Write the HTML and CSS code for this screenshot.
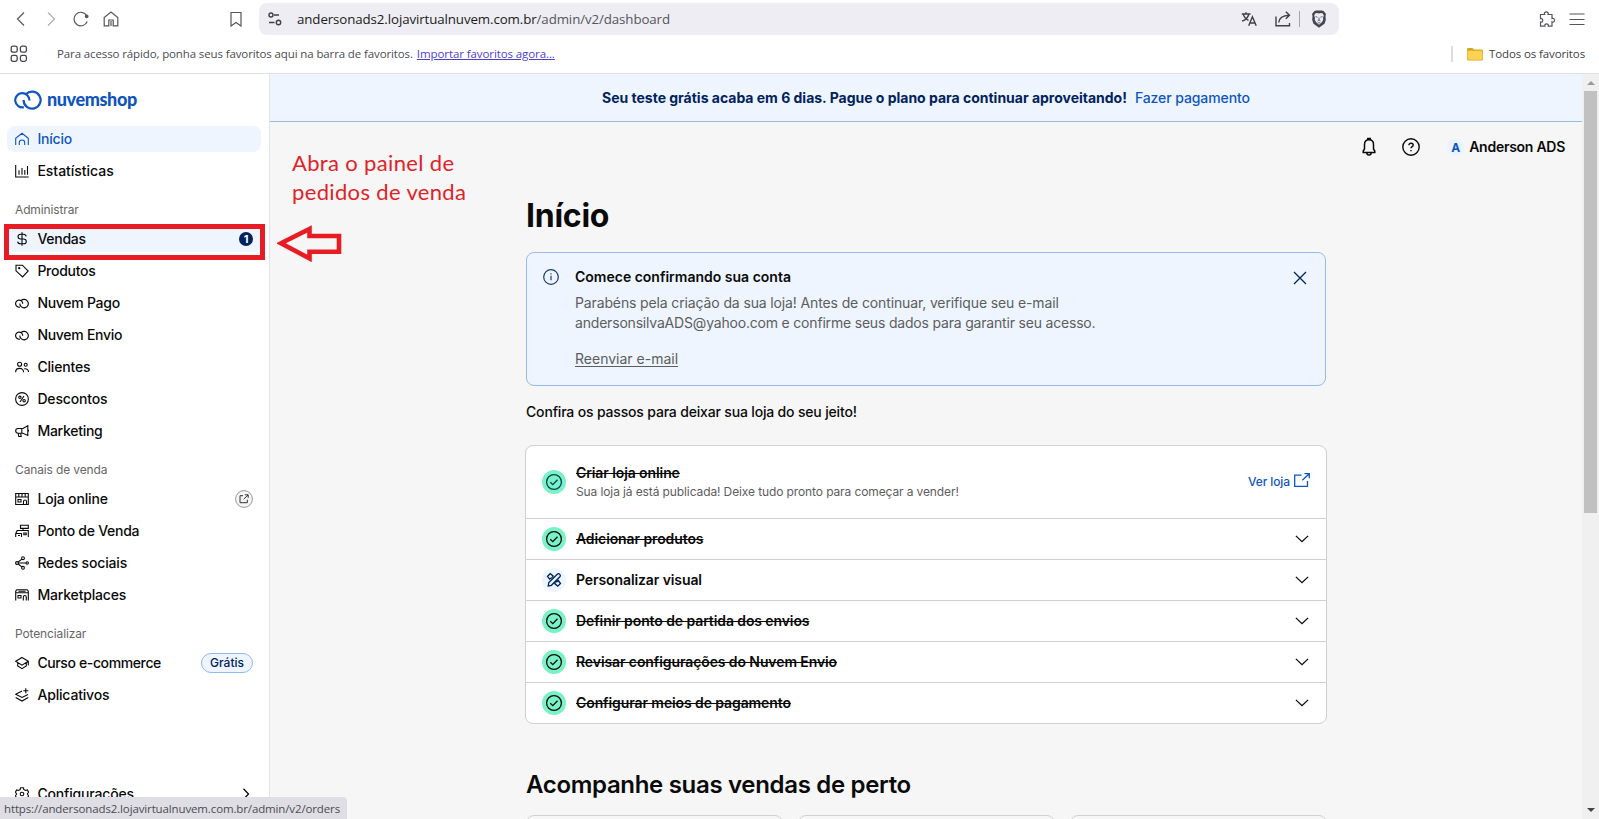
FILE: index.html
```html
<!DOCTYPE html>
<html lang="pt-BR">
<head>
<meta charset="utf-8">
<title>Nuvemshop - Início</title>
<link rel="stylesheet" href="styles.css">
</head>
<body>
<svg class="defs" aria-hidden="true">
  <symbol id="cloud" viewBox="0 0 28 20"><path d="M9.600 10A8.500 8.500 0 1 0 12 4.200"/><path d="M15.400 10.500A7.100 7.100 0 1 0 9.800 17.200"/></symbol>
  <symbol id="check" viewBox="0 0 24 24"><circle class="disc" cx="12" cy="12" r="12"/><circle cx="12" cy="12" r="7.4"/><path d="M8.300 12.300l2.500 2.400 4.700-4.900"/></symbol>
  <symbol id="down" viewBox="0 0 14 8"><path d="M.9.9L7 6.700 13.100.9"/></symbol>
</svg>

<header class="browser">
  <div class="toolbar">
    <svg class="tb back" viewBox="0 0 16 16"><path d="M11 1.500L4.500 8l6.500 6.500"/></svg>
    <svg class="tb fwd" viewBox="0 0 16 16"><path d="M5 1.500L11.500 8 5 14.500"/></svg>
    <svg class="tb" viewBox="0 0 16 16"><path d="M14.200 10.500A6.800 6.800 0 1 1 13.500 4.300"/><circle class="solid" cx="13.700" cy="5.300" r="1.300"/></svg>
    <svg class="tb" viewBox="0 0 16 16"><path d="M1.200 14.800V6.500L8 1l6.800 5.500v8.300H10.200V9H5.800v5.800z"/><path d="M8 10v5"/></svg>
    <svg class="tb mark" viewBox="0 0 16 16"><path d="M3 1.500h10v13.500L8 11.500 3 15z"/></svg>
    <div class="address">
      <svg class="tb dark" viewBox="0 0 16 16"><circle cx="4" cy="4" r="2"/><path d="M7 4h5M2 11.500h5.500"/><circle cx="11.500" cy="11.500" r="2.200"/></svg>
      <span class="url">andersonads2.lojavirtualnuvem.com.br<span>/admin/v2/dashboard</span></span>
      <svg class="tb dark translate" viewBox="0 0 16 16"><path d="M.8 3h8.700M5 1.200V3M2.200 3c.8 3 3 5.300 5.300 6.300M7.900 3C7 6.500 4.500 9 1 10.200M7.700 14.800l3.700-9 3.800 9M9 12h5"/></svg>
      <svg class="tb dark share" viewBox="0 0 16 16"><path d="M1 5.500v9.300h13.500V12M3.800 11.500c.3-4.500 3-7 10.500-7.300M10.800.7l3.700 3.500-3.700 3.500"/></svg>
      <i class="bar"></i>
      <svg class="brave" viewBox="0 0 16 18"><path fill="#454552" d="M3.200 1.200L5 .5h6l1.800.7L15 4l-.5 2 .3 4-1.300 3.700L8 17.700l-5.500-4L1.200 10l.3-4L1 4z"/><path fill="#eeedf3" d="M4.200 3.500L6 3l2 .6L10 3l1.800.5 1 2-.8 2.400.2 2.100-1.400 2.300L8 14.700l-2.800-2.400L3.800 10l.2-2.100-.8-2.400z"/><path fill="none" stroke="#454552" stroke-width=".8" d="M4.500 6.600l2 .6M11.500 6.600l-2 .6M8 7.500V10l-1.500 1M8 10l1.500 1M6.800 12.800h2.400"/></svg>
    </div>
    <svg class="tb puzzle" viewBox="0 0 16 16"><path d="M1.500 3.500h4.200C4.700 1.800 6 .8 7.300.8s2.700 1 1.700 2.700h4v4c1.500-.7 2.500.4 2.500 1.700s-1 2.300-2.500 1.600v4.400H9.300c.5-1.500-.6-2.300-1.700-2.300s-2.200.8-1.700 2.300H1.500v-4.200c1.700.5 2.300-.6 2.300-1.700S3 7.300 1.500 7.700z"/></svg>
    <svg class="tb menu" viewBox="0 0 16 16"><path d="M.5 3h15M.5 8.500h15M.5 13.500h15"/></svg>
  </div>
  <div class="bookmarks">
    <svg class="apps" viewBox="0 0 18 18"><rect x="1.200" y="1.200" width="6" height="6" rx="1.800"/><rect x="10.400" y="1.200" width="6" height="6" rx="1.800"/><rect x="1.200" y="10.400" width="6" height="6" rx="1.800"/><rect x="10.400" y="10.400" width="6" height="6" rx="1.800"/></svg>
    <span class="hint">Para acesso rápido, ponha seus favoritos aqui na barra de favoritos.</span>
    <a class="import">Importar favoritos agora...</a>
    <i class="divider"></i>
    <svg class="folder" viewBox="0 0 16 14"><path fill="#d9a520" d="M0 2.500C0 1.500.5 1 1.500 1h4L7 2.500h7.500c1 0 1.500.5 1.500 1.500v8c0 1-.5 1.500-1.500 1.500h-13C.5 13.500 0 13 0 12z"/><path fill="#fdd253" d="M.5 5c0-.8.4-1.200 1.200-1.200h12.600c.8 0 1.200.4 1.200 1.200v6.600c0 .8-.4 1.200-1.200 1.200H1.700c-.8 0-1.200-.4-1.200-1.200z"/></svg>
    <span class="all">Todos os favoritos</span>
  </div>
</header>

<div class="app">
  <aside class="sidebar">
    <div class="brand"><svg class="logo"><use href="#cloud"/></svg><span>nuvemshop</span></div>
    <nav>
      <a class="item active"><svg class="ic" viewBox="0 0 14 14"><path d="M.7 13V6.200L7 1.200l6.300 5V13M4.300 13v-2.300a2.700 2.700 0 0 1 5.400 0V13"/></svg><span>Início</span></a>
      <a class="item wide"><svg class="ic" viewBox="0 0 14 14"><path d="M.7 1v12h13M4 10.800V6.300M7 10.800V4M9.800 10.800V6M12.500 10.800V2"/></svg><span>Estatísticas</span></a>
      <h6>Administrar</h6>
      <a class="item hover"><svg class="ic" viewBox="0 0 14 14"><path d="M7 .3v13.400M11.200 4.300C11 2.900 9.800 2.200 8.300 2.200H5.900C4.200 2.200 3 3.200 3 4.600S4.100 7 5.800 7h2.600c1.700 0 2.900.9 2.900 2.400s-1.200 2.400-2.900 2.400H5.600c-1.600 0-2.800-.8-2.900-2.200"/></svg><span>Vendas</span><b class="count">1</b></a>
      <a class="item"><svg class="ic" viewBox="0 0 14 14"><path d="M1 1.200h6.400L13.200 7l-5.600 6L1 6.800z"/><circle cx="4.200" cy="4.200" r=".6"/></svg><span>Produtos</span></a>
      <a class="item"><svg class="ic small-cloud"><use href="#cloud"/></svg><span>Nuvem Pago</span></a>
      <a class="item"><svg class="ic small-cloud"><use href="#cloud"/></svg><span>Nuvem Envio</span></a>
      <a class="item near"><svg class="ic" viewBox="0 0 14 14"><circle cx="4.600" cy="4.200" r="2"/><circle cx="10.700" cy="4.800" r="1.500"/><path d="M.6 12.300c0-2.300 1.600-3.900 4-3.900s4 1.600 4 3.900M9.300 8.900c2.400-.7 4.200.9 4.200 3.100"/></svg><span>Clientes</span></a>
      <a class="item near"><svg class="ic" viewBox="0 0 14 14"><circle cx="7" cy="7" r="6.400"/><circle cx="4.900" cy="5.300" r="1.200"/><circle cx="9.100" cy="8.700" r="1.200"/><path d="M9 4L5 10"/></svg><span>Descontos</span></a>
      <a class="item"><svg class="ic" viewBox="0 0 14 14"><path d="M12.800 1.800v9.600L8 9.200H3.200C1.700 9.200.7 8.300.7 6.800s1-2.300 2.500-2.300H8zM6.800 4.500v4.700M3 9.200l.8 3.300h2.400l-.6-3.300M13.500 5.800v1.700"/></svg><span>Marketing</span></a>
      <h6>Canais de venda</h6>
      <a class="item near"><svg class="ic" viewBox="0 0 14 14"><path d="M.7 1.500h12.600v11H.7zM.7 5h12.600M3.800 1.500V5M7 1.500V5M10.200 1.500V5M3 7.500h3V10H3zM8.500 12.500v-3a1.500 1.500 0 0 1 3 0v3"/></svg><span>Loja online</span>
        <svg class="open" viewBox="0 0 18 18"><circle cx="9" cy="9" r="8.400"/><path d="M8 5.700H5v7h7.300v-3M9.800 4.800h3.400v3.100M13 5L8.700 9.200"/></svg></a>
      <a class="item"><svg class="ic" viewBox="0 0 14 14"><path d="M5.500 1.200h7.800v3.200H5.500zM8 4.400v2M.7 13V9.700L2.200 6.500h11.100V13M.7 9.500h5.800V13M8.800 9h2.400v1.800H8.800zM3 11.500h2"/></svg><span>Ponto de Venda</span></a>
      <a class="item near"><svg class="ic" viewBox="0 0 14 14"><circle cx="2" cy="7" r="1.400"/><circle cx="8" cy="2.200" r="1.400"/><circle cx="12.200" cy="7" r="1.200"/><circle cx="8" cy="11.800" r="1.400"/><path d="M3.400 7H11M3.200 6L6.800 3.100M3.200 8l3.600 2.900"/></svg><span>Redes sociais</span></a>
      <a class="item near"><svg class="ic" viewBox="0 0 14 14"><path d="M.7 12.500V3.200L1.700 1.700h10.600l1 1.500v9.300M.7 4.800h12.600M3 7.500h3V10H3zM8.300 12.500V9.300c0-2.400 3-2.400 3 0v3.200M3.500 3.200h7"/></svg><span>Marketplaces</span></a>
      <h6>Potencializar</h6>
      <a class="item tight"><svg class="ic" viewBox="0 0 14 14"><path d="M7 1.500l6.300 3.800L7 9.100.7 5.300zM2.700 6.700v3.200L7 12.700l4.300-2.800V6.700M13.300 5.300v4.200"/></svg><span>Curso e-commerce</span><b class="pill">Grátis</b></a>
      <a class="item near"><svg class="ic" viewBox="0 0 14 14"><path d="M7 3L.7 6.200 7 9.400l6-3M10.800.3v5M8.300 2.800h5M.7 9.500L7 13l6.300-3.500"/></svg><span>Aplicativos</span></a>
    </nav>
    <a class="item near config"><svg class="ic" viewBox="0 0 14 14"><path d="M5.600.7h2.800l.5 1.900 1.700.9 1.800-.6 1.200 2.300L12.300 7l1.300 1.800-1.200 2.300-1.800-.5-1.700.9-.5 1.800H5.600l-.5-1.800-1.700-.9-1.800.5L.4 8.800 1.700 7 .4 5.200l1.200-2.300 1.800.6 1.700-.9z"/><circle cx="7" cy="7" r="1.800"/></svg><span>Configurações</span>
      <svg class="next" viewBox="0 0 8 12"><path d="M1.500.8L6.500 6l-5 5.200"/></svg></a>
  </aside>

  <main>
    <div class="trial"><b>Seu teste grátis acaba em 6 dias. Pague o plano para continuar aproveitando!</b><a>Fazer pagamento</a></div>
    <div class="userbar">
      <svg class="bell" viewBox="0 0 14 20"><path d="M1.200 15.500h11.600V14L11.500 12V7.500c0-2.800-1.700-4.800-4.500-4.800S2.500 4.700 2.500 7.500V12L1.200 14zM5.800 2.800V1.500h2.400v1.300M4.800 15.800c0 3 4.400 3 4.400 0"/></svg>
      <svg class="help" viewBox="0 0 18 18"><circle cx="9" cy="9" r="8.200"/><path d="M6.900 7.200c0-2.600 4.300-2.500 4.300 0C11.200 8.700 9 8.700 9 10.300M9 11.900v1.400"/></svg>
      <span class="avatar">A</span><span class="user">Anderson ADS</span>
    </div>
    <div class="column">
      <h1>Início</h1>
      <section class="alert">
        <svg class="info" viewBox="0 0 16 16"><circle cx="8" cy="8" r="7.300"/><path d="M8 6.800v4.400M8 4.300v1.300"/></svg>
        <div class="msg">
          <h2>Comece confirmando sua conta</h2>
          <p><span>Parabéns pela criação da sua loja! Antes de continuar, verifique seu e-mail</span><br>andersonsilvaADS@yahoo.com e confirme seus dados para garantir seu acesso.</p>
          <a>Reenviar e-mail</a>
        </div>
        <svg class="close" viewBox="0 0 14 14"><path d="M1 1l12 12M13 1L1 13"/></svg>
      </section>
      <p class="intro">Confira os passos para deixar sua loja do seu jeito!</p>
      <section class="steps">
        <div class="step first done"><svg class="st navy"><use href="#check"/></svg>
          <div class="txt"><h3>Criar loja online</h3><p>Sua loja já está publicada! Deixe tudo pronto para começar a vender!</p></div>
          <a class="visit">Ver loja<svg viewBox="0 0 16 14"><path d="M7.500 2.200H.7v11.100h12.800V8M10.500.7h4.800v4.600M15 1L8.300 7.200"/></svg></a></div>
        <div class="step done"><svg class="st"><use href="#check"/></svg><h3>Adicionar produtos</h3><svg class="chev"><use href="#down"/></svg></div>
        <div class="step"><svg class="st tools" viewBox="0 0 24 24"><circle class="disc" cx="12" cy="12" r="12"/><path d="M6.200 18l.6-3.400 8.500-8.400c1.600-1.500 4.100 1 2.600 2.600l-8.500 8.500zM10 9.500L7.600 11.200 5.500 8.300 8.200 5.700l2.900 2.200-.8 1.500M14.300 14.200l2-1.700 2.200 3-2.700 2.600-2.900-2.300.7-1.300"/></svg><h3>Personalizar visual</h3><svg class="chev"><use href="#down"/></svg></div>
        <div class="step done"><svg class="st"><use href="#check"/></svg><h3>Definir ponto de partida dos envios</h3><svg class="chev"><use href="#down"/></svg></div>
        <div class="step done"><svg class="st"><use href="#check"/></svg><h3>Revisar configurações do Nuvem Envio</h3><svg class="chev"><use href="#down"/></svg></div>
        <div class="step done"><svg class="st"><use href="#check"/></svg><h3>Configurar meios de pagamento</h3><svg class="chev"><use href="#down"/></svg></div>
      </section>
      <h2 class="sales">Acompanhe suas vendas de perto</h2>
      <div class="cards"><div></div><div></div><div></div></div>
    </div>
  </main>

  <div class="scroll"><i class="up"></i><i class="thumb"></i><i class="dn"></i></div>
</div>

<div class="highlight"></div>
<div class="note">Abra o painel de<br>pedidos de venda</div>
<svg class="arrow" viewBox="0 0 66 38"><path d="M4 19.300L32.500 5v7h29.500v15.800H32.500v6.600z"/></svg>
<div class="status">https://andersonads2.lojavirtualnuvem.com.br/admin/v2/orders</div>
</body>
</html>
```
FILE: styles.css
```css
* { box-sizing: border-box; margin: 0; padding: 0; }
body { width: 1599px; height: 819px; overflow: hidden; display: flex; flex-direction: column; background: #fff; color: #0a0a0a; font-family: Inter, "Liberation Sans", sans-serif; font-size: 14px; }
svg { flex: none; fill: none; stroke: currentColor; display: block; }
.defs { position: absolute; width: 0; height: 0; }
.disc { stroke: none; }

/* Browser chrome */
.browser { height: 74px; border-bottom: 1px solid #dfe1ea; font-family: "Open Sans", sans-serif; }
.toolbar { height: 38px; display: flex; align-items: center; padding-left: 13px; }
.tb { width: 16px; height: 16px; color: #55565c; stroke-width: 1.2; margin-right: 14px; }
.fwd { color: #aaabb0; }
.solid { fill: currentColor; }
.toolbar > .mark { margin-left: 95px; margin-right: 15px; }
.address { width: 1080px; height: 32px; border-radius: 8px; background: #eeedf3; display: flex; align-items: center; padding-left: 8px; }
.dark { color: #3f4048; stroke-width: 1.4; }
.url { font-size: 13.3px; letter-spacing: -.1px; color: #1b1b20; flex: 1; }
.url span { color: #55565c; }
.address .translate { margin-right: 18px; }
.address .share { margin-right: 8px; }
.bar { width: 1px; height: 16px; background: #a5a5b0; margin-right: 11px; }
.brave { width: 16px; height: 18px; margin-right: 12px; stroke: none; }
.puzzle { margin-left: auto; }
.toolbar > .menu { margin-right: 14px; }
.bookmarks { height: 32px; display: flex; align-items: center; padding-left: 10px; font-size: 11.5px; letter-spacing: -.12px; color: #4b4c52; }
.bookmarks span, .bookmarks a { padding-bottom: 2px; }
.apps { width: 18px; height: 18px; color: #44454b; stroke-width: 1.3; margin-right: 29px; }
.hint { margin-right: 4px; }
.import { color: #4c3fd0; text-decoration: underline; letter-spacing: -.09px; }
.divider { width: 2px; height: 16px; background: #dcdde4; margin: 0 14px 0 auto; }
.folder { width: 16px; height: 14px; stroke: none; margin-right: 6px; }
.all { margin-right: 14px; color: #3f4045; }

/* Page shell */
.app { flex: 1; min-height: 0; display: flex; }
.sidebar { width: 270px; border-right: 1px solid #e3e4e8; display: flex; flex-direction: column; padding: 14px 8px 12px 7px; }
.brand { height: 24px; display: flex; align-items: center; gap: 5px; padding-left: 7px; margin-bottom: 14px; color: #0f55c0; font: 900 18px/22px Lato, sans-serif; letter-spacing: -.4px; }
.brand span { padding-bottom: 2px; }
.logo { width: 28px; height: 20px; stroke-width: 2.200; }
nav { display: flex; flex-direction: column; gap: 6px; }
.item { height: 26px; display: flex; align-items: center; gap: 8px; padding: 0 8px; border-radius: 8px; font-weight: 500; letter-spacing: -.27px; }
.item span { padding-bottom: 2px; }
.item .ic { margin-right: .4px; }
.near { letter-spacing: -.17px; }
.wide { letter-spacing: -.02px; }
.tight { letter-spacing: -.38px; }
.ic { width: 14px; height: 14px; stroke-width: 1.100; }
.small-cloud { stroke-width: 2.300; height: 11px; }
.active { background: #eef5ff; color: #0f55c0; letter-spacing: -.2px; }
.hover { background: #eef5ff; }
h6 { height: 30px; padding: 11px 8px 0; font-weight: 400; font-size: 12px; line-height: 18px; color: #666; letter-spacing: -.13px; }
.count { margin-left: auto; width: 14px; height: 14px; border-radius: 50%; background: #00235c; color: #fff; font-size: 11px; line-height: 14px; text-align: center; letter-spacing: 0; }
.open { width: 18px; height: 18px; margin-left: auto; stroke-width: 1; color: #333; }
.open circle { stroke: #999; fill: #f6f6f6; }
.pill { margin-left: auto; height: 20px; width: 52px; border: 1px solid #93b8ee; border-radius: 10px; background: #eef5ff; color: #00235c; font-size: 12px; font-weight: 500; line-height: 18px; text-align: center; letter-spacing: 0; }
.config { margin-top: auto; }
.next { width: 8px; height: 12px; margin: 0 3px 0 auto; stroke-width: 1.300; }

main { flex: 1; min-width: 0; background: #f6f6f6; overflow: hidden; }
.trial { height: 48px; background: #eef5ff; border-bottom: 1px solid #97b9e2; display: flex; align-items: center; justify-content: center; gap: 8px; padding-bottom: 1px; color: #00235c; letter-spacing: -.01px; }
.trial a { color: #0f55c0; font-weight: 500; letter-spacing: -.09px; }
.userbar { height: 50px; display: flex; align-items: center; justify-content: flex-end; padding-right: 17px; }
.bell { width: 14px; height: 20px; stroke-width: 1.500; margin-right: 26px; }
.help { width: 18px; height: 18px; stroke-width: 1.400; margin-right: 27px; }
.avatar { width: 17px; height: 17px; border-radius: 50%; background: #eaf3ff; color: #0f55c0; font-size: 12px; font-weight: 700; line-height: 17px; text-align: center; margin-right: 5px; }
.user { font-weight: 600; letter-spacing: -.27px; padding-bottom: 1px; }

.column { width: 800px; margin: 24px auto 0; }
h1 { font-size: 32px; line-height: 40px; font-weight: 700; letter-spacing: -.25px; margin-bottom: 16px; }
.alert { height: 134px; border: 1px solid #97b9ee; border-radius: 8px; background: #eef5ff; display: flex; padding: 14px 18px 0 16px; line-height: 20px; }
.info { width: 16px; height: 16px; margin: 2px 16px 0 0; color: #1c3a70; stroke-width: 1.200; }
.msg { flex: 1; }
.msg h2 { font-size: 14px; font-weight: 600; line-height: 20px; }
.msg p { margin: 6px 0 16px; color: #5d5d5d; letter-spacing: -.19px; }
.msg p span { letter-spacing: -.13px; }
.msg a { color: #5d5d5d; text-decoration: underline; text-underline-offset: 2px; }
.close { width: 14px; height: 14px; margin-top: 4px; color: #00235c; stroke-width: 1.300; }
.intro { margin: 16px 0 23px; line-height: 20px; font-weight: 500; letter-spacing: -.17px; }
.steps { margin: 0 -1px; border: 1px solid #d0d0d0; border-radius: 8px; background: #fff; }
.step { height: 41px; display: flex; align-items: center; border-bottom: 1px solid #d0d0d0; padding: 0 17px 0 16px; }
.step:last-child { height: 40px; border: 0; }
.first { height: 73px; }
.st { width: 24px; height: 24px; margin-right: 10px; stroke-width: 1.300; }
.disc { fill: #79f3c5; }
.navy { color: #0b3d5c; }
.tools .disc { fill: #eef5ff; }
.tools { color: #00235c; }
h3 { font-size: 14px; line-height: 20px; font-weight: 600; letter-spacing: -.1px; }
.done h3 { text-decoration: line-through; text-decoration-thickness: 1px; }
.txt { padding-bottom: 2px; }
.txt p { font-size: 12px; line-height: 16px; color: #5d5d5d; letter-spacing: -.11px; margin-top: 1px; }
.chev { width: 14px; height: 8px; margin-left: auto; stroke-width: 1.300; }
.visit { margin-left: auto; margin-right: -1px; display: flex; gap: 4px; align-items: center; color: #0f55c0; font-size: 12px; font-weight: 500; letter-spacing: -.1px; padding-bottom: 2px; }
.visit svg { width: 16px; height: 14px; stroke-width: 1.300; margin-bottom: 2px; }
.sales { font-size: 24px; line-height: 32px; font-weight: 600; letter-spacing: -.32px; margin: 45px 0 14px; }
.cards { display: grid; grid-template-columns: repeat(3, 1fr); gap: 15px; margin: 0 -.5px; }
.cards div { height: 90px; border: 1px solid #d0d0d0; border-radius: 8px; }

.scroll { width: 17px; background: #f0f0f1; display: flex; flex-direction: column; align-items: center; }
.up, .dn { border: 4px solid transparent; }
.up { border-top: 0; border-bottom-color: #9a9a9a; margin: 7px 0 6px; }
.thumb { width: 13px; height: 422px; background: #c1c1c1; }
.dn { border-bottom: 0; border-top-color: #444; margin: auto 0 7px; }

/* Callouts drawn over the page */
.highlight { position: absolute; left: 4px; top: 224px; width: 261px; height: 36px; border: 5px solid #e81c24; }
.note { position: absolute; left: 292px; top: 148px; font: 22px/29px Lato, sans-serif; letter-spacing: .35px; color: #de2329; }
.arrow { position: absolute; left: 277px; top: 224px; width: 66px; height: 38px; color: #e81c24; stroke-width: 4.600; }
.status { position: absolute; left: 0; top: 797px; width: 347px; height: 22px; padding-left: 4px; background: #dfdee4; border-top-right-radius: 4px; color: #4b4c52; font: 11.500px/23px "Open Sans", sans-serif; letter-spacing: -.13px; }
```
